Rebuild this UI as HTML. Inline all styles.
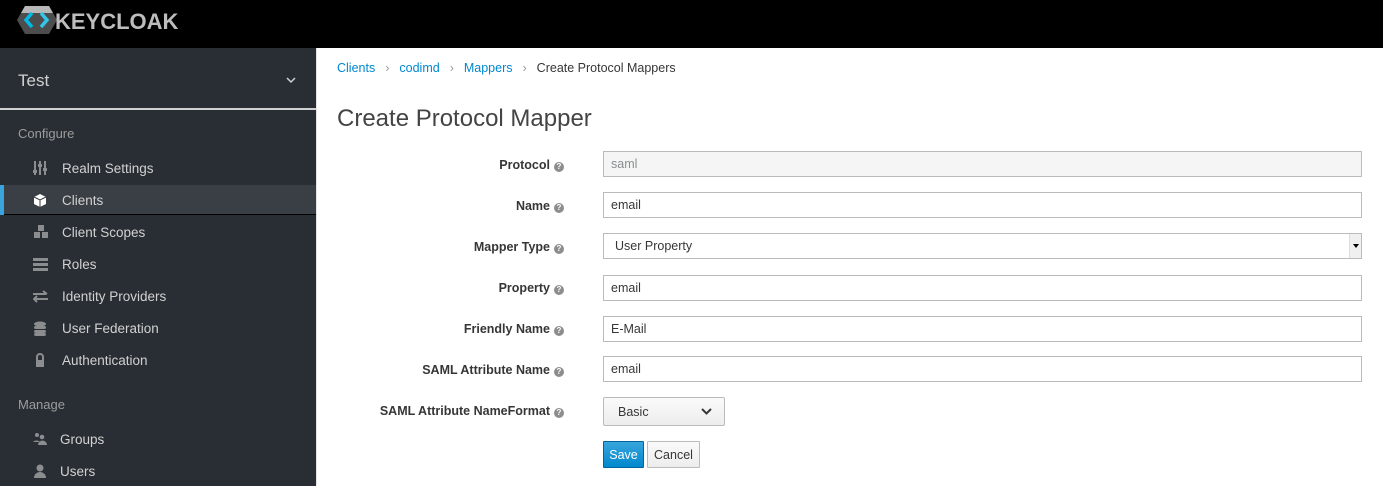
<!DOCTYPE html>
<html><head><style>
*{box-sizing:border-box;margin:0;padding:0}
body{width:1383px;height:486px;overflow:hidden;font-family:"Liberation Sans",sans-serif;font-size:13px;background:#fff;position:relative}
.hdr{position:absolute;left:0;top:0;width:1383px;height:48px;background:#000}
.side{position:absolute;left:0;top:48px;width:317px;height:438px;background:#292e34;border-right:1px solid #e5e5e5}
.realm{position:absolute;left:18px;top:71px;color:#d1d1d1;font-size:17px}
.div{position:absolute;left:0;top:108px;width:316px;height:2px;background:#d1d1d1}
.sec{position:absolute;left:18px;color:#9c9c9c;font-size:13px}
.item{position:absolute;left:0;width:316px;height:30px;color:#d1d1d1;font-size:13.5px;line-height:31px;padding-left:62px}
.item svg{position:absolute;left:33px;top:8px}
.act{background:#393f44;border-bottom:1px solid #000}
.act:before{content:"";position:absolute;left:0;top:0;width:4px;height:30px;background:#39a5dc}
.bc{position:absolute;left:337px;top:61px;font-size:12.5px;color:#363636}
.bc a{color:#0088ce;text-decoration:none}
.bc span.s{color:#9c9c9c;margin:0 10px}
h1{position:absolute;left:337px;top:105px;font-weight:normal;font-size:24px;color:#444}
.lbl{position:absolute;right:819px;font-weight:bold;font-size:12.5px;color:#363636;white-space:nowrap}
.q{display:inline-block;width:10px;height:10px;border-radius:50%;background:#8b8d8f;color:#fff;font-size:8px;line-height:10px;text-align:center;vertical-align:0;margin-left:4px}
.inp{position:absolute;left:603px;width:759px;height:26px;border:1px solid #bbb;font-size:12.5px;line-height:25px;padding-left:7px;color:#363636;background:#fff}
.btn{position:absolute;height:27px;border:1px solid #bbb;border-radius:1px;font-size:12.5px;line-height:26px;text-align:center}
</style></head><body>
<div class="hdr">
<svg style="position:absolute;left:17px;top:5px" width="40" height="30" viewBox="0 0 40 30"><polygon points="8,1 32,1 40,15 32,29 8,29 0,15" fill="#4d4d4d"/><polygon points="8,1 32,1 36,8 4,8" fill="#b8b8b8"/><path d="M15,8 L9,15 L15,22" stroke="#00b8e3" stroke-width="3.5" fill="none"/><path d="M24,8 L30,15 L24,22" stroke="#33c6e9" stroke-width="3.5" fill="none"/></svg>
<div style="position:absolute;left:55px;top:9px;color:#bdbdbd;font-weight:bold;font-size:22px;letter-spacing:0px">KEYCLOAK</div>
</div>
<div class="side">
</div>
<div class="realm">Test</div>
<svg style="position:absolute;left:286px;top:77px" width="10" height="7"><path d="M1,1 L5,5 L9,1" stroke="#d1d1d1" stroke-width="1.5" fill="none"/></svg>
<div class="div"></div>
<div class="sec" style="top:126px">Configure</div>
<div class="item" style="top:153px"><svg width="14" height="14"><g fill="#8b8d8f"><rect x="1" y="0" width="2" height="14"/><rect x="6" y="0" width="2" height="14"/><rect x="11" y="0" width="2" height="14"/><rect x="0" y="9" width="4" height="3"/><rect x="5" y="3" width="4" height="3"/><rect x="10" y="7" width="4" height="3"/></g></svg>Realm Settings</div>
<div class="item act" style="top:185px"><svg width="14" height="14"><polygon points="7,1 13,4 13,11 7,14 1,11 1,4" fill="#fff"/><path d="M1,4 L7,7 L13,4 M7,7 L7,14" stroke="#393f44" stroke-width="1" fill="none"/></svg>Clients</div>
<div class="item" style="top:217px"><svg width="16" height="14"><g fill="#8b8d8f"><rect x="5" y="0" width="6" height="6"/><rect x="1" y="7" width="6" height="6"/><rect x="9" y="7" width="6" height="6"/></g></svg>Client Scopes</div>
<div class="item" style="top:249px"><svg width="15" height="14"><g fill="#8b8d8f"><rect x="0" y="1" width="15" height="3"/><rect x="0" y="6" width="15" height="3"/><rect x="0" y="11" width="15" height="3"/></g></svg>Roles</div>
<div class="item" style="top:281px"><svg width="15" height="14"><path d="M0,5 H13 M10,2 L14,5 M1,10 H15 M4,7 L1,10 L4,13" stroke="#8b8d8f" stroke-width="2" fill="none"/></svg>Identity Providers</div>
<div class="item" style="top:313px"><svg width="14" height="15"><g fill="#8b8d8f"><ellipse cx="7" cy="3" rx="6" ry="2.5"/><rect x="1" y="5" width="12" height="3" rx="2"/><rect x="1" y="9" width="12" height="3" rx="2"/><rect x="1" y="12" width="12" height="3" rx="2"/></g></svg>User Federation</div>
<div class="item" style="top:345px"><svg width="14" height="14"><path d="M4,7 V4 a3,3 0 0 1 6,0 V7" stroke="#8b8d8f" stroke-width="2" fill="none"/><rect x="3" y="7" width="8" height="7" fill="#8b8d8f"/></svg>Authentication</div>
<div class="sec" style="top:397px">Manage</div>
<div class="item" style="top:424px;padding-left:60px"><svg width="14" height="14"><g fill="#8b8d8f"><circle cx="4" cy="3" r="2"/><circle cx="9" cy="5" r="2.3"/><path d="M0,10 a4,3 0 0 1 7,0 Z"/><path d="M5,13 a4,4 0 0 1 9,0 Z"/></g></svg>Groups</div>
<div class="item" style="top:456px;padding-left:60px"><svg width="14" height="14"><g fill="#8b8d8f"><circle cx="7" cy="4" r="3.5"/><path d="M1,14 a6,6 0 0 1 12,0 Z"/></g></svg>Users</div>

<div class="bc"><a>Clients</a><span class="s">›</span><a>codimd</a><span class="s">›</span><a>Mappers</a><span class="s">›</span>Create Protocol Mappers</div>
<h1>Create Protocol Mapper</h1>

<div class="lbl" style="top:158px">Protocol<span class="q">?</span></div>
<div class="inp" style="top:151px;background:#f5f5f5;color:#8b8d8f">saml</div>
<div class="lbl" style="top:199px">Name<span class="q">?</span></div>
<div class="inp" style="top:192px">email</div>
<div class="lbl" style="top:240px">Mapper Type<span class="q">?</span></div>
<div class="inp" style="top:233px;padding-left:11px">User Property<div style="position:absolute;right:0;top:0;width:12px;height:24px;background:#f0f0f0;border-left:1px solid #ddd"><svg style="position:absolute;left:3px;top:10px" width="6" height="4"><polygon points="0,0 6,0 3,4" fill="#000"/></svg></div></div>
<div class="lbl" style="top:281px">Property<span class="q">?</span></div>
<div class="inp" style="top:275px">email</div>
<div class="lbl" style="top:322px">Friendly Name<span class="q">?</span></div>
<div class="inp" style="top:316px">E-Mail</div>
<div class="lbl" style="top:363px">SAML Attribute Name<span class="q">?</span></div>
<div class="inp" style="top:356px">email</div>
<div class="lbl" style="top:404px">SAML Attribute NameFormat<span class="q">?</span></div>
<div class="btn" style="left:603px;top:397px;width:122px;height:29px;line-height:28px;text-align:left;padding-left:14px;background:linear-gradient(#fafafa,#ededed);color:#363636;border-radius:2px">Basic<svg style="position:absolute;right:12px;top:10px" width="11" height="7"><path d="M1,1 L5.5,5.5 L10,1" stroke="#363636" stroke-width="2" fill="none"/></svg></div>
<div class="btn" style="left:603px;top:441px;width:41px;background:linear-gradient(#39a5dc,#0088ce);border-color:#00659c;color:#fff">Save</div>
<div class="btn" style="left:647px;top:441px;width:53px;background:linear-gradient(#fafafa,#ededed);color:#363636">Cancel</div>
</body></html>
